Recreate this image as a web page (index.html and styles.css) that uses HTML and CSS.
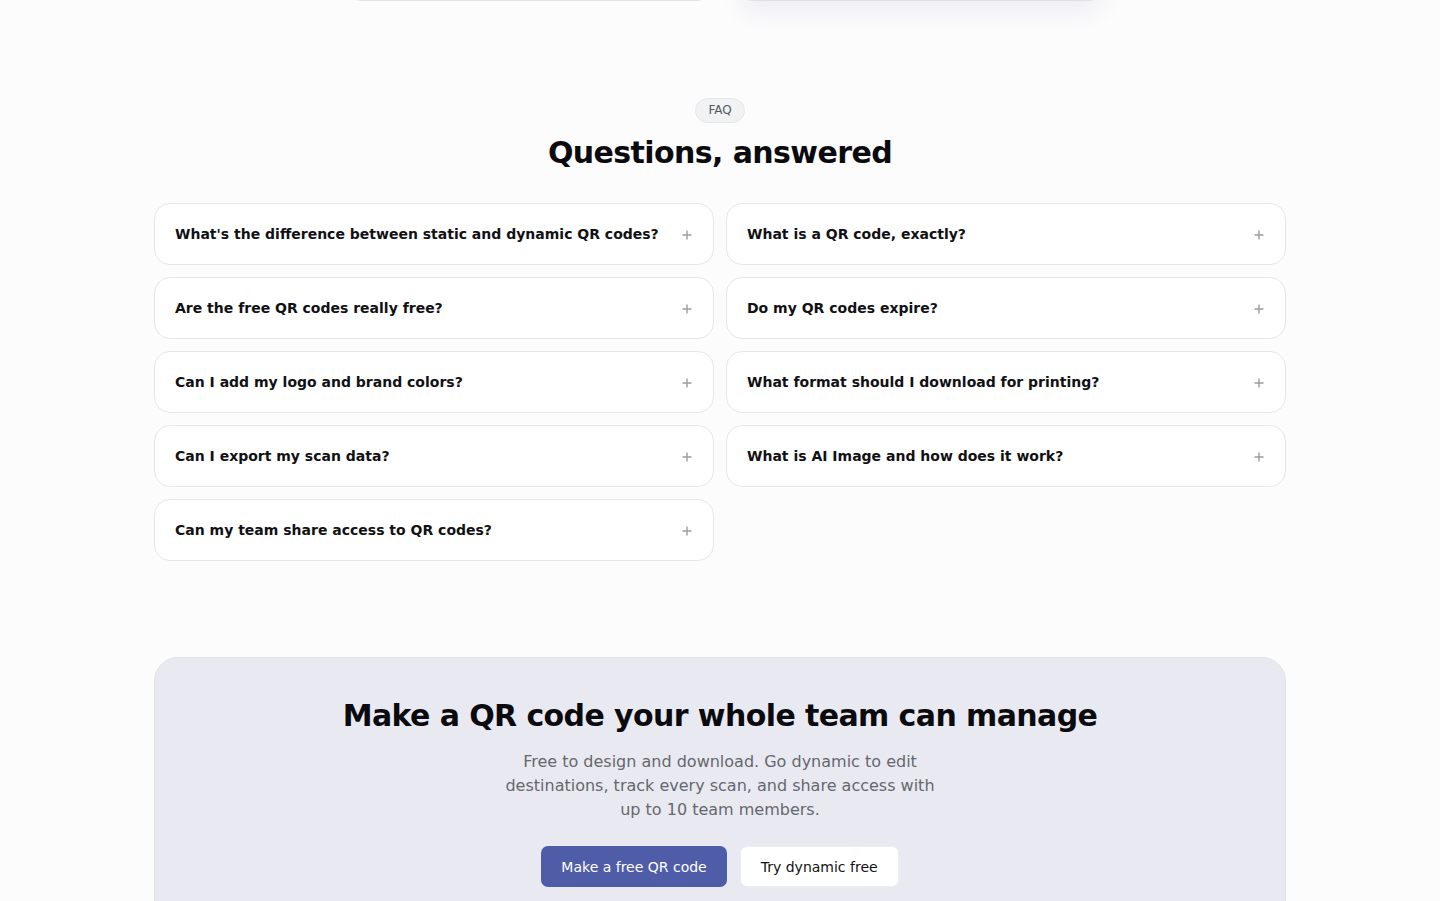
FILE: index.html
```html
<!DOCTYPE html>
<html lang="en">
<head>
<meta charset="utf-8">
<title>FAQ</title>
<link rel="stylesheet" href="styles.css">
</head>
<body>
<div class="prev">
  <div class="prev-card"></div>
  <div class="prev-card prev-card--raised"></div>
</div>

<section class="faq">
  <div class="faq-head">
    <span class="pill">FAQ</span>
    <h2 class="faq-title">Questions, answered</h2>
  </div>
  <div class="faq-grid">
    <div class="faq-col">
      <div class="faq-item"><span>What's the difference between static and dynamic QR codes?</span><svg class="plus" viewBox="0 0 10 10"><path d="M5 0.5v9M0.5 5h9"/></svg></div>
      <div class="faq-item"><span>Are the free QR codes really free?</span><svg class="plus" viewBox="0 0 10 10"><path d="M5 0.5v9M0.5 5h9"/></svg></div>
      <div class="faq-item"><span>Can I add my logo and brand colors?</span><svg class="plus" viewBox="0 0 10 10"><path d="M5 0.5v9M0.5 5h9"/></svg></div>
      <div class="faq-item"><span>Can I export my scan data?</span><svg class="plus" viewBox="0 0 10 10"><path d="M5 0.5v9M0.5 5h9"/></svg></div>
      <div class="faq-item"><span>Can my team share access to QR codes?</span><svg class="plus" viewBox="0 0 10 10"><path d="M5 0.5v9M0.5 5h9"/></svg></div>
    </div>
    <div class="faq-col">
      <div class="faq-item"><span>What is a QR code, exactly?</span><svg class="plus" viewBox="0 0 10 10"><path d="M5 0.5v9M0.5 5h9"/></svg></div>
      <div class="faq-item"><span>Do my QR codes expire?</span><svg class="plus" viewBox="0 0 10 10"><path d="M5 0.5v9M0.5 5h9"/></svg></div>
      <div class="faq-item"><span>What format should I download for printing?</span><svg class="plus" viewBox="0 0 10 10"><path d="M5 0.5v9M0.5 5h9"/></svg></div>
      <div class="faq-item"><span>What is AI Image and how does it work?</span><svg class="plus" viewBox="0 0 10 10"><path d="M5 0.5v9M0.5 5h9"/></svg></div>
    </div>
  </div>
</section>

<section class="cta">
  <h2 class="cta-title">Make a QR code your whole team can manage</h2>
  <p class="cta-text">Free to design and download. Go dynamic to edit destinations, track every scan, and share access with up to 10 team members.</p>
  <div class="cta-actions">
    <a class="btn btn--primary" href="#">Make a free QR code</a>
    <a class="btn btn--secondary" href="#">Try dynamic free</a>
  </div>
</section>
</body>
</html>
```

FILE: styles.css
```css
* { box-sizing: border-box; }

html, body {
  margin: 0;
  padding: 0;
}

body {
  background: #fcfcfd;
  font-family: "DejaVu Sans", "Liberation Sans", sans-serif;
  color: #0b0b0f;
  height: 901px;
  overflow: hidden;
}

.prev {
  display: flex;
  justify-content: center;
  gap: 30px;
  height: 1px;
  padding-left: 10px;
}

.prev-card {
  width: 362px;
  height: 40px;
  margin-top: -39px;
  background: #ffffff;
  border: 1px solid #e2e3e8;
  border-radius: 12px;
}

.prev-card--raised {
  box-shadow: 0 12px 24px rgba(30, 35, 80, 0.06);
  border-color: #dfe0e8;
}

.faq {
  padding-top: 97px;
}

.faq-head {
  display: flex;
  flex-direction: column;
  align-items: center;
}

.pill {
  display: inline-block;
  font-size: 12px;
  line-height: 15px;
  padding: 4px 12px;
  border-radius: 999px;
  background: #f1f2f4;
  border: 1px solid #e7e8eb;
  color: #55585e;
}

.faq-title {
  margin: 10px 0 30px;
  font-size: 30px;
  line-height: 40px;
  letter-spacing: -0.6px;
  font-weight: 700;
  color: #0b0b0f;
}

.faq-grid {
  width: 1132px;
  margin: 0 auto;
  display: grid;
  grid-template-columns: 1fr 1fr;
  gap: 12px;
  align-items: start;
}

.faq-col {
  display: flex;
  flex-direction: column;
  gap: 12px;
}

.faq-item {
  height: 62px;
  display: flex;
  align-items: center;
  justify-content: space-between;
  padding: 0 21px 0 20px;
  background: #ffffff;
  border: 1px solid #e6e7eb;
  border-radius: 16px;
  font-size: 14px;
  font-weight: 700;
  color: #111114;
}

.plus {
  width: 10px;
  height: 10px;
  flex: none;
  margin-top: 1px;
}

.plus path {
  stroke: #9a9ca3;
  stroke-width: 1.4;
  fill: none;
}

.cta {
  width: 1132px;
  margin: 96px auto 0;
  padding: 38px 40px 60px;
  background: #e9eaf1;
  border: 1px solid #e2e3ea;
  border-radius: 24px;
  text-align: center;
}

.cta-title {
  margin: 0;
  font-size: 30px;
  line-height: 40px;
  letter-spacing: -0.6px;
  font-weight: 700;
  color: #0b0b0f;
}

.cta-text {
  width: 440px;
  margin: 14px auto 0;
  font-size: 16px;
  line-height: 24px;
  color: #65676e;
}

.cta-actions {
  margin-top: 24px;
  display: flex;
  justify-content: center;
  gap: 13px;
}

.btn {
  display: inline-flex;
  align-items: center;
  height: 41px;
  padding: 0 20px;
  border-radius: 7px;
  font-size: 14px;
  text-decoration: none;
}

.btn--primary {
  background: #4f5da8;
  color: #ffffff;
}

.btn--secondary {
  background: #ffffff;
  color: #111114;
  border: 1px solid #ecedf1;
}
```
